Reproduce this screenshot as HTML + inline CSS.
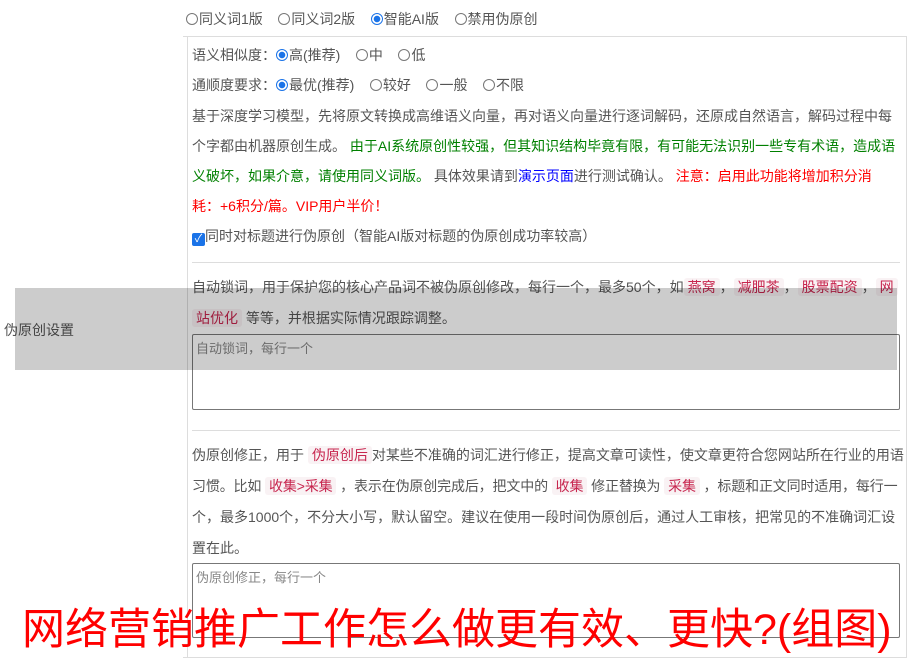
<!DOCTYPE html>
<html><head><meta charset="utf-8"><style>
*{margin:0;padding:0;box-sizing:border-box}
body{width:911px;height:658px;overflow:hidden;background:#fff;font-family:"Liberation Sans","Noto Sans CJK SC",sans-serif;font-size:14px;color:#555;position:relative}
.a{position:absolute;white-space:nowrap;line-height:20px}
.r{display:inline-block;width:12px;height:12px;border:1px solid #777;border-radius:50%;vertical-align:-1px;margin-right:1px;background:#fff}
.r.on{border:1px solid #1a73e8;background:radial-gradient(circle,#1a73e8 3px,#fff 3.5px)}
.g{color:#008000}.red{color:#f00}.b{color:#00f}
code{font-family:inherit;color:#c7254e;background:#f9f2f4;border-radius:3px;padding:1px 4px}
.ta{position:absolute;border:1px solid #777;border-radius:2px;color:#888;font-size:13px;padding:3px 3px;background:#fff}
.hr{position:absolute;left:192px;width:708px;height:1px;background:#ddd}
</style></head><body>
<div style="position:absolute;left:187px;top:36px;width:1px;height:622px;background:#ddd"></div>
<div style="position:absolute;left:183px;top:36px;width:724px;height:622px;border:1px solid #ddd;border-left:none"></div>
<div class="a" style="left:186px;top:9px"><span class="r"></span>同义词1版 &nbsp; &nbsp;<span class="r"></span>同义词2版 &nbsp; &nbsp;<span class="r on"></span>智能AI版 &nbsp; &nbsp;<span class="r"></span>禁用伪原创</div>
<div class="a" style="left:192px;top:45px">语义相似度：<span class="r on"></span>高(推荐) &nbsp; &nbsp;<span class="r"></span>中 &nbsp; &nbsp;<span class="r"></span>低</div>
<div class="a" style="left:192px;top:75px">通顺度要求：<span class="r on"></span>最优(推荐) &nbsp; &nbsp;<span class="r"></span>较好 &nbsp; &nbsp;<span class="r"></span>一般 &nbsp; &nbsp;<span class="r"></span>不限</div>
<div class="a" style="left:192px;top:106px">基于深度学习模型，先将原文转换成高维语义向量，再对语义向量进行逐词解码，还原成自然语言，解码过程中每</div>
<div class="a" style="left:192px;top:136px">个字都由机器原创生成。 <span class="g">由于AI系统原创性较强，但其知识结构毕竟有限，有可能无法识别一些专有术语，造成语</span></div>
<div class="a" style="left:192px;top:166px"><span class="g">义破坏，如果介意，请使用同义词版。</span> 具体效果请到<span class="b">演示页面</span>进行测试确认。 <span class="red">注意：启用此功能将增加积分消</span></div>
<div class="a red" style="left:192px;top:196px">耗：+6积分/篇。VIP用户半价！</div>
<div class="a" style="left:192px;top:226px"><span style="display:inline-block;width:13px;height:13px;background:#1a73e8;border-radius:2px;color:#fff;font-size:11px;line-height:13px;text-align:center;vertical-align:-1px">✓</span>同时对标题进行伪原创（智能AI版对标题的伪原创成功率较高）</div>
<div class="hr" style="top:262px"></div>
<div class="a" style="left:192px;top:277px">自动锁词，用于保护您的核心产品词不被伪原创修改，每行一个，最多50个，如<code>燕窝</code>，<code>减肥茶</code>，<code>股票配资</code>，<code>网</code></div>
<div class="a" style="left:192px;top:308px"><code>站优化</code> 等等，并根据实际情况跟踪调整。</div>
<div class="ta" style="left:192px;top:334px;width:708px;height:76px">自动锁词，每行一个</div>
<div class="a" style="left:4px;top:320px">伪原创设置</div>
<div style="position:absolute;left:15px;top:288px;width:882px;height:82px;background:rgba(0,0,0,0.2)"></div>
<div class="hr" style="top:430px"></div>
<div class="a" style="left:192px;top:445px">伪原创修正，用于 <code>伪原创后</code>对某些不准确的词汇进行修正，提高文章可读性，使文章更符合您网站所在行业的用语</div>
<div class="a" style="left:192px;top:476px;letter-spacing:-0.15px">习惯。比如 <code>收集&gt;采集</code> ，表示在伪原创完成后，把文中的 <code>收集</code> 修正替换为 <code>采集</code> ，标题和正文同时适用，每行一</div>
<div class="a" style="left:192px;top:507px">个，最多1000个，不分大小写，默认留空。建议在使用一段时间伪原创后，通过人工审核，把常见的不准确词汇设</div>
<div class="a" style="left:192px;top:538px">置在此。</div>
<div class="ta" style="left:192px;top:563px;width:708px;height:75px">伪原创修正，每行一个</div>
<div class="a" style="left:22px;top:605px;font-size:43px;line-height:50px;color:#f00">网络营销推广工作怎么做更有效、更快?(组图)</div>
</body></html>
